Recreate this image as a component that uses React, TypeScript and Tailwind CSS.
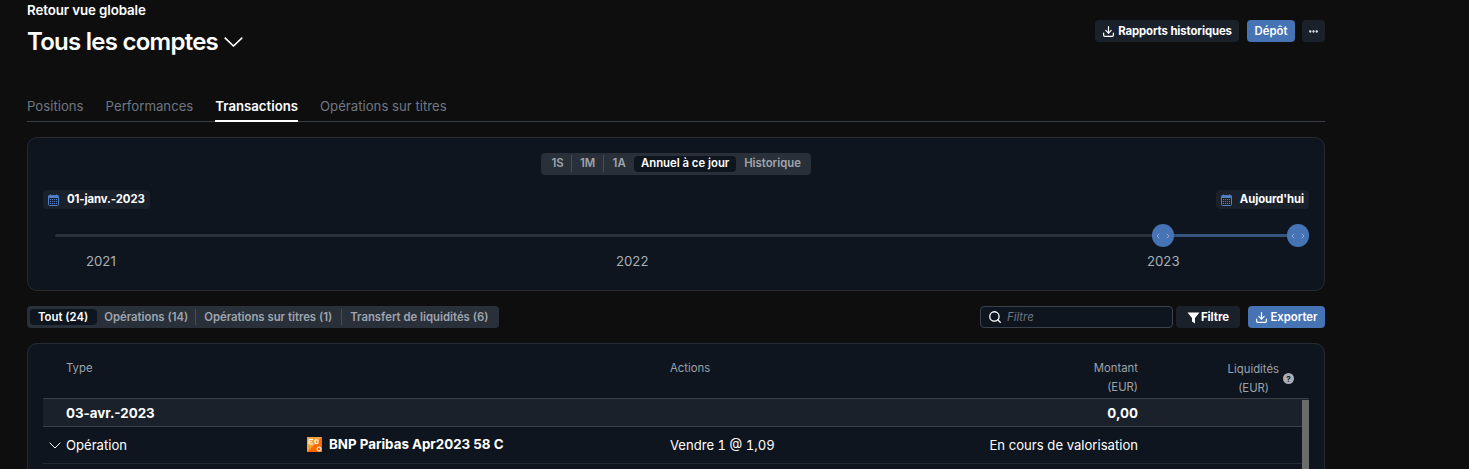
import { Download, Search, Ellipsis, ChevronLeft, ChevronRight } from "lucide-react";

function Handle({ className }: { className: string }) {
  return (
    <div className={`absolute top-[-10px] w-[22px] h-[23px] rounded-full bg-[#4673b4] flex items-center justify-center gap-[2px] ${className}`}>
      <ChevronLeft size={8} strokeWidth={1.5} className="text-[#d5dfee]" />
      <ChevronRight size={8} strokeWidth={1.5} className="text-[#d5dfee]" />
    </div>
  );
}

function CalendarIcon() {
  return (
    <svg width="11" height="12" viewBox="0 0 11 12" className="shrink-0 text-[#4f7fc4]">
      <rect x="0.5" y="1.5" width="10" height="10" rx="1" fill="none" stroke="currentColor" />
      <rect x="0.5" y="1.5" width="10" height="2.5" fill="currentColor" />
      <path d="M2.5 0.5V2M8.5 0.5V2" stroke="currentColor" />
      <path d="M2 5.5H9M2 7.5H9M2 9.5H9" stroke="currentColor" strokeWidth="1" strokeDasharray="1 1" />
    </svg>
  );
}

function FlatChevron({ width, height, stroke }: { width: number; height: number; stroke: number }) {
  return (
    <svg width={width} height={height} viewBox={`0 0 ${width} ${height}`} fill="none" className="shrink-0">
      <path d={`M0.7 0.7L${width / 2} ${height - 1}L${width - 0.7} 0.7`} stroke="currentColor" strokeWidth={stroke} />
    </svg>
  );
}

function DateChip({ label }: { label: string }) {
  return (
    <div className="h-[19px] flex items-center gap-[8px] px-[5px] rounded-[4px] bg-[#1a212b] text-[11.33px] font-bold tracking-[-0.08px] text-white">
      <CalendarIcon />
      <span>{label}</span>
    </div>
  );
}

export default function App() {
  return (
    <div className="h-[469px] w-[1469px] overflow-hidden bg-[#0e0e0f] text-white font-['Inter',sans-serif]">
      <div className="w-[1298px] ml-[27px]">
        <div className="flex justify-between items-start h-[89px]">
          <div>
            <div className="text-[13.33px] font-semibold leading-[20px] h-[20px] tracking-[-0.1px]">Retour vue globale</div>
            <div className="flex items-center gap-[6px] mt-[3px] h-[38px]">
              <span className="text-[24px] font-semibold leading-[38px] tracking-[-0.75px]">Tous les comptes</span>
              <FlatChevron width={19} height={10} stroke={1.6} />
            </div>
          </div>
          <div className="flex items-center mt-[20px]">
            <div className="h-[22px] w-[144px] flex items-center justify-center gap-[3px] rounded-[4px] bg-[#1a212b] text-[11.33px] font-bold tracking-[-0.1px]">
              <Download size={13} strokeWidth={2.25} />
              <span>Rapports historiques</span>
            </div>
            <div className="ml-[8px] h-[22px] w-[48px] flex items-center justify-center rounded-[4px] bg-[#4673b4] text-[11.33px] font-semibold">Dépôt</div>
            <div className="ml-[7px] h-[22px] w-[23px] flex items-center justify-center rounded-[4px] bg-[#1a212b]">
              <Ellipsis size={11} strokeWidth={3} />
            </div>
          </div>
        </div>

        <div className="flex gap-[22px] h-[33px] border-b border-[#3a3e45] text-[13.2px] leading-[35px] text-[#6f7680]">
          <span>Positions</span>
          <span>Performances</span>
          <span className="h-[33px] font-semibold text-white border-b-2 border-white">Transactions</span>
          <span>Opérations sur titres</span>
        </div>

        <div className="mt-[15px] h-[154px] rounded-[10px] border border-[#262b32] bg-[#0e151e] px-[15px] pt-[15px]">
          <div className="flex justify-center">
            <div className="h-[22px] pb-[1px] flex items-center rounded-[4px] bg-[#2a3039] px-[3px] text-[11.33px] font-semibold text-[#9fa5ad]">
              <span className="w-[28px] text-center border-r border-[#474d57]">1S</span>
              <span className="w-[32px] text-center border-r border-[#474d57]">1M</span>
              <span className="w-[30px] text-center">1A</span>
              <span className="h-[16px] w-[102px] flex items-center justify-center rounded-[4px] bg-[#0e151e] text-white">Annuel à ce jour</span>
              <span className="pl-[8px] pr-[7px]">Historique</span>
            </div>
          </div>
          <div className="flex justify-between mt-[15px]">
            <DateChip label="01-janv.-2023" />
            <DateChip label="Aujourd'hui" />
          </div>
          <div className="relative mt-[25px] ml-[12px] mr-[11px] h-[3px] rounded-full bg-[#2b313a]">
            <div className="absolute right-0 top-0 h-[3px] w-[135px] bg-[#35557f]" />
            <Handle className="right-[124px]" />
            <Handle className="right-[-11px]" />
            <span className="absolute left-[31px] top-[19px] text-[13.2px] leading-[16px] text-[#abb0b7]">2021</span>
            <span className="absolute left-[561px] top-[19px] text-[13.2px] leading-[16px] text-[#abb0b7]">2022</span>
            <span className="absolute left-[1092px] top-[19px] text-[13.2px] leading-[16px] text-[#abb0b7]">2023</span>
          </div>
        </div>

        <div className="flex items-center justify-between mt-[15px] h-[22px]">
          <div className="h-[22px] flex items-center rounded-[4px] bg-[#2a3039] px-[3px] text-[11.33px] font-semibold text-[#9fa5ad]">
            <span className="h-[16px] pl-[8px] pr-[9px] flex items-center rounded-[4px] bg-[#0e151e] text-white">Tout (24)</span>
            <span className="pl-[7px] pr-[7px] border-r border-[#474d57]">Opérations (14)</span>
            <span className="pl-[8px] pr-[9px] border-r border-[#474d57]">Opérations sur titres (1)</span>
            <span className="pl-[8px] pr-[8px]">Transfert de liquidités (6)</span>
          </div>
          <div className="flex items-center">
            <div className="w-[193px] h-[22px] flex items-center gap-[5px] pl-[7px] rounded-[4px] border border-[#3a424d] bg-[#0e151e] text-[11.33px] italic text-[#6f7680]">
              <Search size={14} strokeWidth={2.25} className="text-white" />
              <span>Filtre</span>
            </div>
            <div className="ml-[3px] w-[64px] h-[22px] flex items-center justify-center gap-[1px] rounded-[4px] bg-[#1a212b] text-[11.33px] font-bold">
              <svg width="13" height="13" viewBox="0 0 13 13" className="shrink-0">
                <path d="M0.5 1.5H12.5L8 7V12.5L5 10.5V7Z" fill="white" />
              </svg>
              <span>Filtre</span>
            </div>
            <div className="ml-[8px] w-[77px] h-[22px] flex items-center justify-center gap-[2px] rounded-[4px] bg-[#4673b4] text-[11.33px] font-semibold">
              <Download size={13} strokeWidth={2.25} />
              <span>Exporter</span>
            </div>
          </div>
        </div>

        <div className="mt-[15px] h-[200px] rounded-[10px] border border-[#262b32] bg-[#0e151e] px-[15px]">
          <div className="relative flex h-[55px] border-b border-[#3a3e45] text-[11.33px] leading-[19px] text-[#9da3ab]">
            <div className="w-[627px] pl-[23px] pt-[15px]">Type</div>
            <div className="w-[300px] pt-[15px]">Actions</div>
            <div className="w-[168px] pt-[15px] text-right">
              <div>Montant</div>
              <div>(EUR)</div>
            </div>
            <div className="w-[141px] pt-[16px] text-right">
              <div>Liquidités</div>
              <div className="pr-[10px]">(EUR)</div>
            </div>
            <div className="absolute left-[1240px] top-[29px] w-[11px] h-[11px] rounded-full bg-[#a9aeb4] flex items-center justify-center text-[8px] font-bold leading-none text-[#0e151e]">?</div>
          </div>
          <div className="relative">
            <div className="flex h-[28px] items-center pt-[2px] bg-[#1a212b] border-b border-[#3a3e45] text-[13.33px] font-bold">
              <div className="w-[627px] pl-[23px]">03-avr.-2023</div>
              <div className="w-[300px]" />
              <div className="w-[168px] text-right">0,00</div>
            </div>
            <div className="flex h-[37px] items-center pt-[1px] border-b border-[#262b32] text-[13.1px]">
              <div className="w-[264px] flex items-center gap-[5px] pl-[6px]">
                <FlatChevron width={12} height={7} stroke={1} />
                <span>Opération</span>
              </div>
              <div className="w-[363px] flex items-center gap-[7px] text-[13.33px] font-bold mb-[2px]">
                <svg width="15" height="15" viewBox="0 0 15 15" className="shrink-0">
                  <rect width="15" height="15" fill="#ff6a00" />
                  <path d="M0 15 L15 0 L0 0 Z" fill="#f2a33a" />
                  <path d="M2 2.5H6M2 2.5V7H6M2 4.7H5M8 3H11V6.5H8Z" fill="none" stroke="#fff" strokeWidth="1" />
                  <circle cx="12" cy="12" r="2" fill="none" stroke="#fff" strokeWidth="1" />
                </svg>
                <span>BNP Paribas Apr2023 58 C</span>
              </div>
              <div className="w-[300px] tabular-nums">Vendre 1 @ 1,09</div>
              <div className="w-[168px] text-right">En cours de valorisation</div>
            </div>
            <div className="absolute right-0 top-[1px] w-[7px] h-[80px] bg-[#6b6b6b]" />
          </div>
        </div>
      </div>
    </div>
  );
}
